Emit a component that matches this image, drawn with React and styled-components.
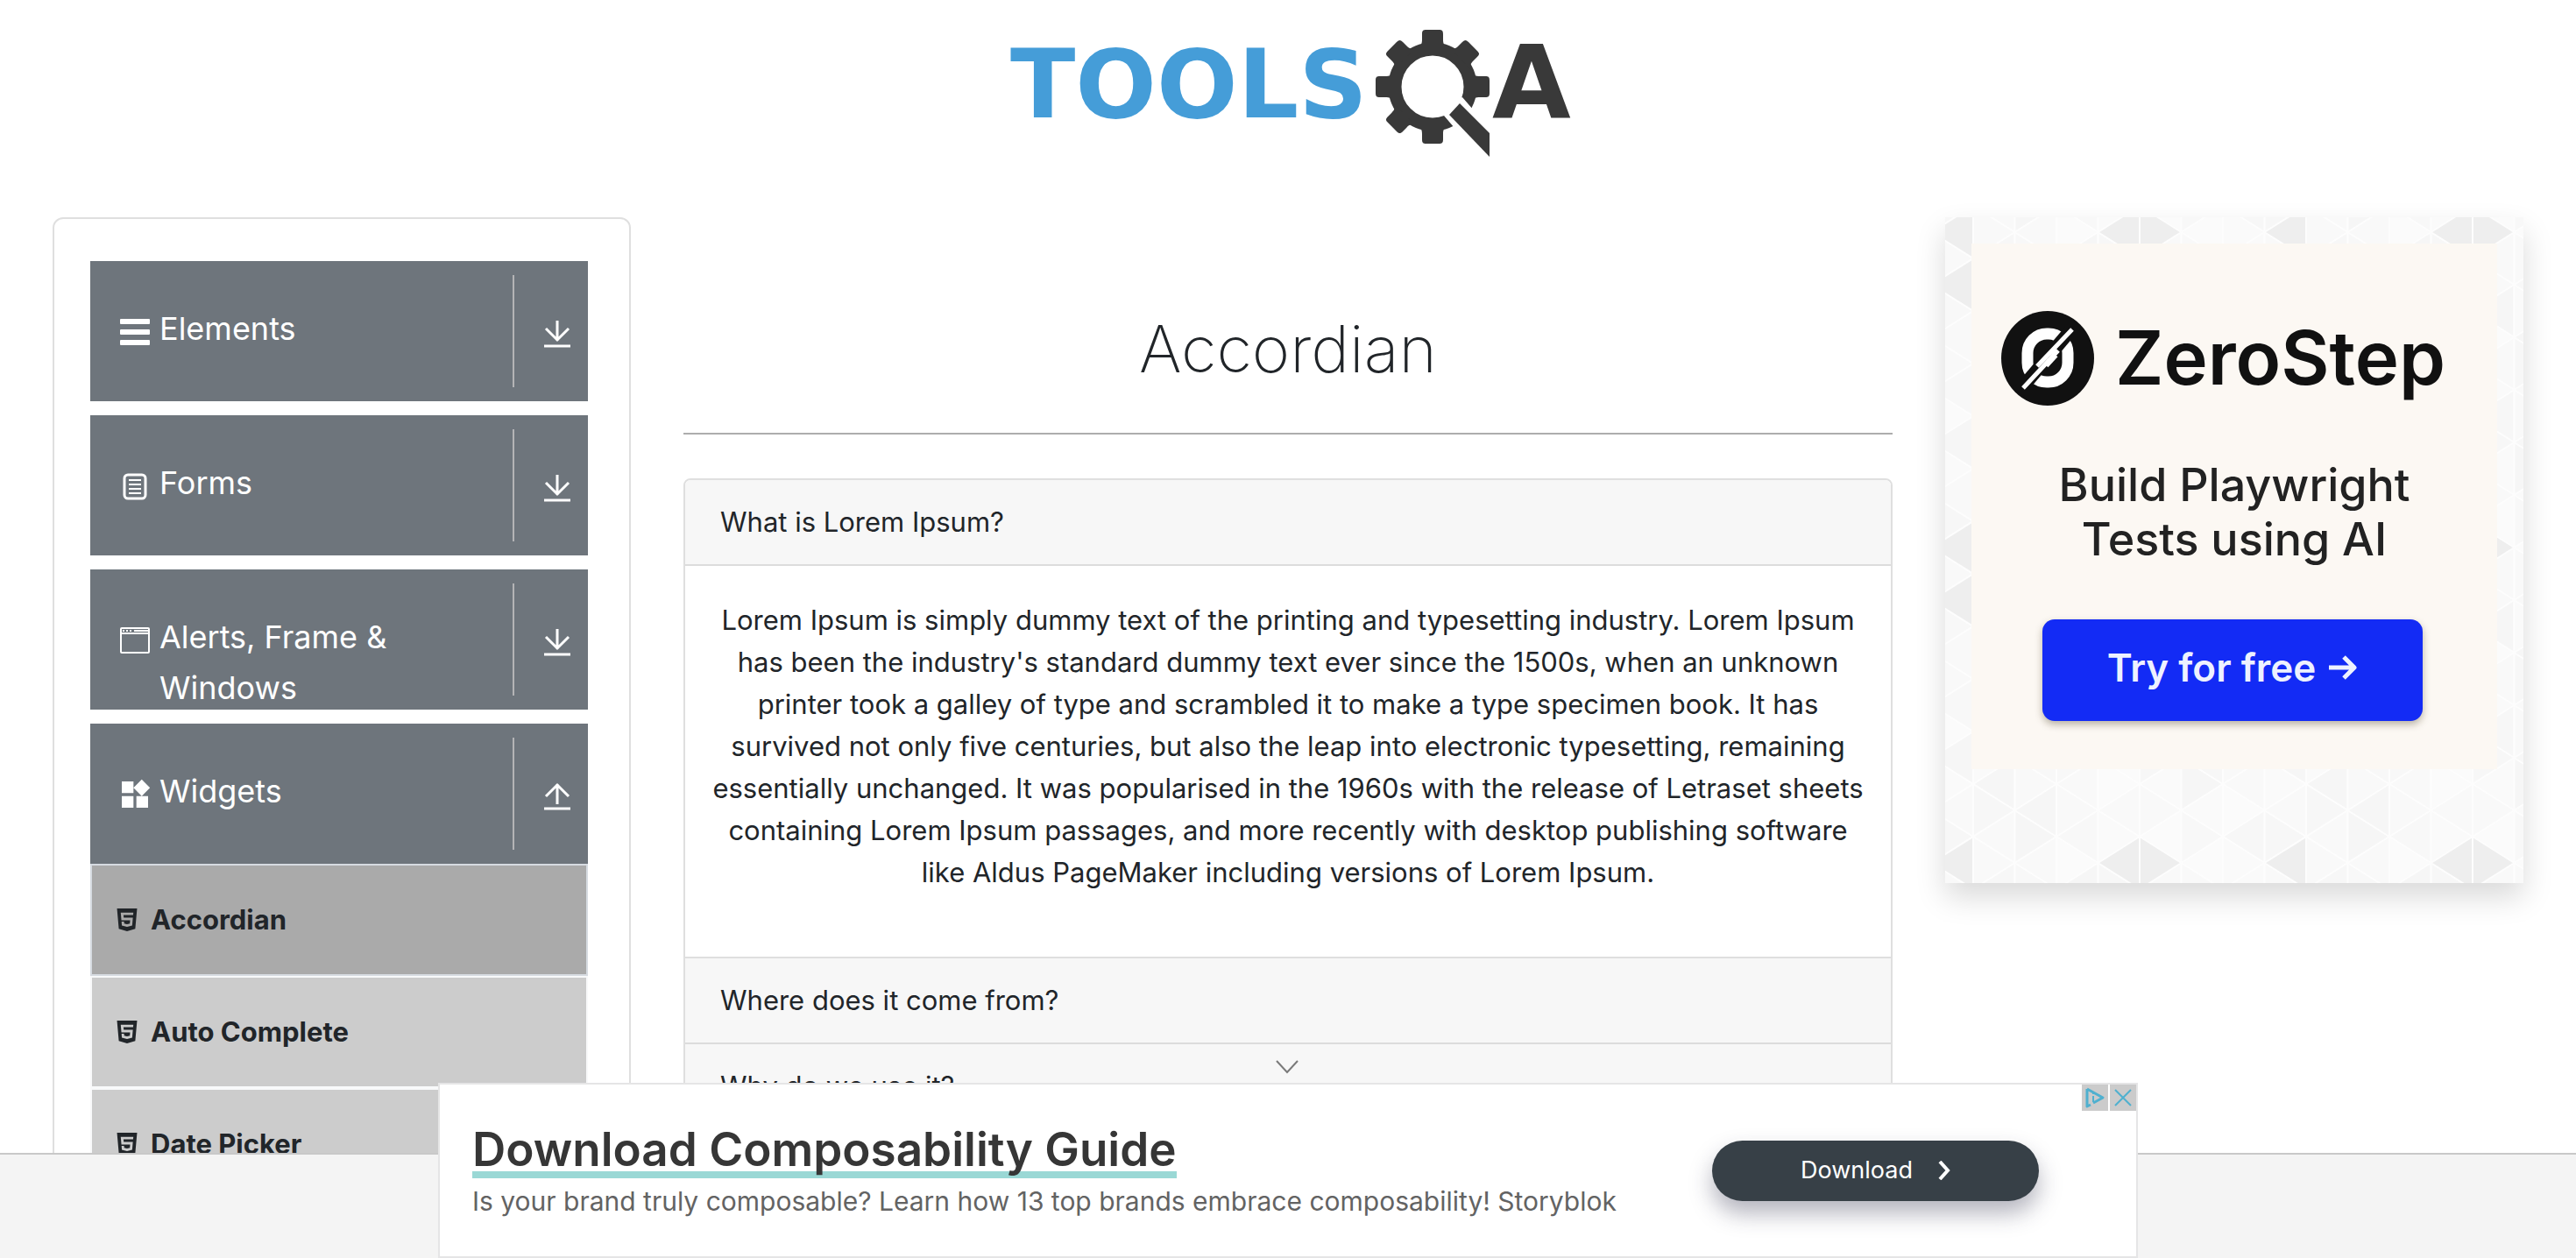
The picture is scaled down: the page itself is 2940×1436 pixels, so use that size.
import React from "react";
import styled, { createGlobalStyle } from "styled-components";
import { AiFillHtml5 } from "react-icons/ai";
import { MdWidgets } from "react-icons/md";

const GlobalStyle = createGlobalStyle`
  *, *::before, *::after { box-sizing: border-box; }
  body {
    margin: 0;
    background: #fff;
    color: #212529;
    font-family: Inter, "Liberation Sans", sans-serif;
    font-size: 31px;
    line-height: 48px;
  }
  button { font: inherit; color: inherit; border: 0; padding: 0; cursor: pointer; }
  a { color: inherit; text-decoration: none; }
`;

const Page = styled.div`
  height: 100vh;
  overflow: hidden;
`;

const Header = styled.header`
  display: flex;
  justify-content: center;
  padding: 34px 0 68px;
`;

const LogoLink = styled.a`
  display: block;
  height: 146px;

  svg { overflow: visible; }
`;

const Columns = styled.div`
  display: grid;
  grid-template-columns: 1fr 2fr 1fr;
  align-items: start;
  padding: 0 30px;
`;

const Column = styled.div`
  min-width: 0;
  padding: 0 30px;
`;

const Sidebar = styled.nav`
  border: 2px solid #dfdfdf;
  border-radius: 12px;
  padding: 48px 47px 48px 41px;
`;

const Group = styled.div`
  & + & { margin-top: 16px; }
`;

const GroupButton = styled.button`
  display: flex;
  width: 100%;
  height: 160px;
  overflow: hidden;
  background: #6e757c;
  color: #fff;
  text-align: left;
`;

const GroupTitle = styled.span`
  display: flex;
  flex: 1;
  gap: 8px;
  padding: 48px 60px 0 31px;
  font-size: 36px;
  line-height: 58px;
`;

const GroupIcon = styled.span`
  display: flex;
  align-items: center;
  flex: none;
  height: 66px;
`;

const GroupToggle = styled.span`
  display: flex;
  align-items: center;
  justify-content: center;
  flex: none;
  width: 86px;
  height: 128px;
  margin: 16px 0;
  padding: 6px 0 0 14px;
  border-left: 2px solid #b4b4b6;
`;

const List = styled.ul`
  list-style: none;
  margin: 0;
  padding: 0;
`;

const ListLink = styled.a`
  display: flex;
  align-items: center;
  gap: 11px;
  height: 128px;
  padding-left: 24px;
  border: 2px solid ${(p) => (p.$active ? "#d6dbe1" : "#f8f9fa")};
  background: ${(p) => (p.$active ? "#aaaaaa" : "#cccccc")};
  font-size: 31px;
  font-weight: 700;
`;

const Title = styled.h1`
  margin: 102px 0 48px;
  font-size: 74px;
  font-weight: 200;
  line-height: 96px;
  text-align: center;
`;

const Rule = styled.hr`
  height: 2px;
  margin: 0 0 50px;
  border: 0;
  background: #adadad;
`;

const Accordion = styled.section`
  border: 2px solid #dfdfdf;
  border-radius: 8px;
  overflow: hidden;
`;

const Question = styled.button`
  display: block;
  width: 100%;
  padding: 24px 40px;
  border-bottom: 2px solid #dcdcdc;
  background: #f7f7f7;
  text-align: left;
`;

const Answer = styled.div`
  padding: 38px 30px 40px;
  border-bottom: 2px solid #dfdfdf;
  text-align: center;

  p { margin: 0 0 32px; }
`;

const Promo = styled.aside`
  position: relative;
  padding: 30px 30px 130px;
  background: #f8f8f8;
  box-shadow: 0 16px 32px rgba(0, 0, 0, 0.15);
`;

const PromoPattern = styled.svg`
  position: absolute;
  inset: 0;
  width: 100%;
  height: 100%;
`;

const PromoBody = styled.div`
  position: relative;
  display: flex;
  flex-direction: column;
  align-items: center;
  aspect-ratio: 1;
  padding-top: 77px;
  background: #fcf8f3;
`;

const Brand = styled.div`
  display: flex;
  align-items: center;
  align-self: stretch;
  gap: 24px;
  height: 108px;
  padding-left: 34px;
  color: #111;
  font-size: 85px;
  font-weight: 600;
`;

const PromoText = styled.p`
  margin: 60px 0 60px;
  color: #222;
  font-size: 52px;
  font-weight: 500;
  line-height: 62px;
  text-align: center;
`;

const PromoButton = styled.a`
  display: flex;
  align-items: center;
  justify-content: center;
  gap: 14px;
  width: 434px;
  height: 116px;
  margin-right: 4px;
  padding-bottom: 6px;
  border-radius: 14px;
  background: #132bf5;
  box-shadow: 0 4px 8px rgba(60, 50, 20, 0.35);
  color: #eef2ff;
  font-size: 44px;
  font-weight: 600;
`;

const Footer = styled.footer`
  position: fixed;
  right: 0;
  bottom: 0;
  left: 0;
  height: 120px;
  border-top: 2px solid #c8c8c8;
  background: #f4f4f4;
`;

const Banner = styled.aside`
  position: fixed;
  bottom: 0;
  left: 50%;
  display: flex;
  align-items: center;
  justify-content: space-between;
  width: 1940px;
  height: 200px;
  padding: 0 111px 0 37px;
  border: 2px solid #e5e5e6;
  background: #fff;
  transform: translateX(-50%);
`;

const BannerText = styled.div`
  padding-top: 6px;
  color: #636363;
  font-size: 30px;
  line-height: 52px;
`;

const BannerTitle = styled.a`
  display: block;
  width: fit-content;
  height: 64px;
  border-bottom: 8px solid #9ad8d5;
  color: #363636;
  font-size: 53px;
  font-weight: 600;
  line-height: 62px;
`;

const BannerButton = styled.a`
  display: flex;
  align-items: center;
  justify-content: center;
  gap: 28px;
  width: 373px;
  height: 69px;
  border-radius: 35px;
  background: #374047;
  box-shadow: 0 14px 26px rgba(40, 40, 70, 0.35);
  color: #fff;
  font-size: 27px;
`;

const Collapse = styled.button`
  position: absolute;
  top: -36px;
  left: 943px;
  display: flex;
  align-items: center;
  justify-content: center;
  width: 48px;
  height: 32px;
  background: none;
`;

const AdControls = styled.div`
  position: absolute;
  top: 0;
  right: 0;
  display: flex;
  gap: 2px;
`;

const AdControl = styled.button`
  display: flex;
  align-items: center;
  justify-content: center;
  width: 30px;
  height: 30px;
  background: #cbcbcb;
`;

const TEETH = [0, 45, 90, 135, 180, 225, 270, 315];

function Logo() {
  return (
    <svg width="648" height="146" viewBox="0 0 648 146" role="img" aria-label="TOOLSQA">
      <text x="7" y="100" fill="#459dd8" fontFamily="DejaVu Sans" fontWeight="700" fontSize="109">
        TOOLS
      </text>
      <g transform="translate(423 0)" fill="#393939">
        <circle cx="66" cy="65" r="43" fill="none" stroke="#393939" strokeWidth="15" />
        {TEETH.map((angle) => (
          <path
            key={angle}
            transform={`rotate(${angle} 66 65)`}
            d="M48 20c5-2 6-4 6-9V5c0-4 1-5 5-5h14c4 0 5 1 5 5v6c0 5 1 7 6 9z"
          />
        ))}
        <path d="M100 77L113 92L124 106L100 124L91 112L79 98L84 84z" fill="#fff" />
        <path d="M97 84L131 118V145L85 97z" />
      </g>
      <text x="557" y="100" fill="#393939" fontFamily="DejaVu Sans" fontWeight="700" fontSize="116">
        A
      </text>
    </svg>
  );
}

const BarsIcon = () => (
  <svg width="40" height="40" viewBox="0 0 40 40" fill="#fff">
    <rect x="3" y="5" width="34" height="6" rx="1" />
    <rect x="3" y="17" width="34" height="6" rx="1" />
    <rect x="3" y="29" width="34" height="6" rx="1" />
  </svg>
);

const FormIcon = () => (
  <svg width="40" height="40" viewBox="0 0 40 40" fill="none" stroke="#fff">
    <rect x="8" y="7" width="24" height="27" rx="4" strokeWidth="3" />
    <path d="M13 13h14M13 18h14M13 23h14M13 28h14" strokeWidth="2" />
  </svg>
);

const WindowIcon = () => (
  <svg width="40" height="40" viewBox="0 0 40 40" fill="none" stroke="#fff" strokeWidth="2">
    <rect x="4" y="6" width="32" height="28" rx="1" />
    <path d="M4 12h32" />
    <path d="M6 9h2M10 9h2M14 9h2M19 9h16" />
  </svg>
);

const WidgetsIcon = () => <MdWidgets size={40} />;

const ArrowIcon = ({ up }) => (
  <svg width="32" height="34" viewBox="0 0 32 34" fill="none" stroke="#fff" strokeWidth="3">
    {up ? <path d="M16 26V3M3 17L16 4l13 13" /> : <path d="M16 2v23M3 11l13 13 13-13" />}
    <path d="M1 31h30" />
  </svg>
);

const GROUPS = [
  { title: "Elements", Icon: BarsIcon },
  { title: "Forms", Icon: FormIcon },
  { title: "Alerts, Frame & Windows", Icon: WindowIcon },
  { title: "Widgets", Icon: WidgetsIcon, items: ["Accordian", "Auto Complete", "Date Picker"] },
];

const COL = 47.5;
const SIDE = 60;
const TINTS = ["#f8f8f8", "#fafafa", "#f6f6f6", "#fbfbfb", "#f9f9f9", "#f9f9f9", "#f7f7f7"];

function buildTriangles() {
  const out = [];
  for (let c = 0; c < 8; c++) {
    const x0 = c * COL;
    const x1 = x0 + COL;
    const a = c % 2 ? 30 : 0;
    const b = c % 2 ? 0 : 30;
    for (let j = -1; j < 6; j++) {
      const ya = a + j * SIDE;
      const yb = b + j * SIDE;
      const row = (j + 6) % 6;
      out.push([`${x0},${ya} ${x0},${ya + 60} ${x1},${ya + 30}`, TINTS[(c * 3 + row * 5) % 7]]);
      out.push([`${x1},${yb} ${x1},${yb + 60} ${x0},${yb + 30}`, TINTS[(c * 5 + row * 2 + 3) % 7]]);
    }
  }
  return out;
}

const TRIANGLES = buildTriangles();

function TrianglePattern() {
  return (
    <PromoPattern aria-hidden="true">
      <defs>
        <pattern id="triangles" x="32" y="47" width="380" height="360" patternUnits="userSpaceOnUse">
          {TRIANGLES.map(([points, fill], i) => (
            <polygon key={i} points={points} fill={fill} stroke="#fdfdfd" strokeWidth="2" />
          ))}
          <g fill="#eeeeee" stroke="#fdfdfd" strokeWidth="2">
            <polygon points="142.5,330 190,300 190,360" />
            <polygon points="237.5,330 190,300 190,360" />
            <polygon points="332.5,330 380,300 380,360" />
            <polygon points="332.5,30 380,0 380,60" />
          </g>
        </pattern>
      </defs>
      <rect width="100%" height="100%" fill="url(#triangles)" />
    </PromoPattern>
  );
}

const ZeroStepMark = () => (
  <svg width="106" height="108" viewBox="0 0 106 108" fill="none">
    <ellipse cx="53" cy="54" rx="53" ry="54" fill="#111" />
    <rect x="30" y="26" width="46" height="55" rx="22" stroke="#fff" strokeWidth="13" />
    <path d="M86 14L20 92" stroke="#111" strokeWidth="15" />
    <path d="M81 21L41 63M65 45L25 88" stroke="#fff" strokeWidth="5" />
    <path d="M52 63L63 51" stroke="#fff" strokeWidth="4" />
  </svg>
);

export default function App() {
  return (
    <>
      <GlobalStyle />
      <Page>
        <Header>
          <LogoLink href="#">
            <Logo />
          </LogoLink>
        </Header>

        <Columns>
          <Column>
            <Sidebar>
              {GROUPS.map(({ title, Icon, items }) => (
                <Group key={title}>
                  <GroupButton type="button" aria-expanded={Boolean(items)}>
                    <GroupTitle>
                      <GroupIcon>
                        <Icon />
                      </GroupIcon>
                      {title}
                    </GroupTitle>
                    <GroupToggle>
                      <ArrowIcon up={Boolean(items)} />
                    </GroupToggle>
                  </GroupButton>
                  {items && (
                    <List>
                      {items.map((item, i) => (
                        <li key={item}>
                          <ListLink href="#" $active={i === 0}>
                            <AiFillHtml5 size={32} />
                            {item}
                          </ListLink>
                        </li>
                      ))}
                    </List>
                  )}
                </Group>
              ))}
            </Sidebar>
          </Column>

          <Column as="main">
            <Title>Accordian</Title>
            <Rule />
            <Accordion>
              <Question type="button" aria-expanded="true">
                What is Lorem Ipsum?
              </Question>
              <Answer>
                <p>
                  Lorem Ipsum is simply dummy text of the printing and typesetting industry. Lorem
                  Ipsum has been the industry's standard dummy text ever since the 1500s, when an
                  unknown printer took a galley of type and scrambled it to make a type specimen
                  book. It has survived not only five centuries, but also the leap into electronic
                  typesetting, remaining essentially unchanged. It was popularised in the 1960s with
                  the release of Letraset sheets containing Lorem Ipsum passages, and more recently
                  with desktop publishing software like Aldus PageMaker including versions of Lorem
                  Ipsum.
                </p>
              </Answer>
              <Question type="button" aria-expanded="false">
                Where does it come from?
              </Question>
              <Question type="button" aria-expanded="false">
                Why do we use it?
              </Question>
            </Accordion>
          </Column>

          <Column>
            <Promo>
              <TrianglePattern />
              <PromoBody>
                <Brand>
                  <ZeroStepMark />
                  ZeroStep
                </Brand>
                <PromoText>
                  Build Playwright
                  <br />
                  Tests using AI
                </PromoText>
                <PromoButton href="#">
                  Try for free
                  <svg width="34" height="32" viewBox="0 0 34 32" fill="none" stroke="#eef2ff" strokeWidth="5">
                    <path d="M1 16h29M18 4l12 12-12 12" strokeLinejoin="round" />
                  </svg>
                </PromoButton>
              </PromoBody>
            </Promo>
          </Column>
        </Columns>

        <Footer />

        <Banner>
          <BannerText>
            <BannerTitle href="#">Download Composability Guide</BannerTitle>
            Is your brand truly composable? Learn how 13 top brands embrace composability! Storyblok
          </BannerText>
          <BannerButton href="#">
            Download
            <svg width="15" height="22" viewBox="0 0 15 22" fill="none" stroke="#fff" strokeWidth="4">
              <path d="M3 1l9 10-9 10" />
            </svg>
          </BannerButton>
          <Collapse type="button" aria-label="Collapse ad">
            <svg width="26" height="16" viewBox="0 0 26 16" fill="none" stroke="#7a7a7a" strokeWidth="2">
              <path d="M1 1l12 13L25 1" />
            </svg>
          </Collapse>
          <AdControls>
            <AdControl type="button" aria-label="About this ad">
              <svg width="24" height="24" viewBox="0 0 24 24" fill="none" stroke="#4fb0cf" strokeWidth="3">
                <path d="M3 2v20l4-2M3 2l18 10-11 6" strokeLinejoin="round" />
                <path d="M10 10v7M10 6v2" strokeWidth="2" />
              </svg>
            </AdControl>
            <AdControl type="button" aria-label="Close ad">
              <svg width="20" height="20" viewBox="0 0 20 20" fill="none" stroke="#4fb0cf" strokeWidth="2">
                <path d="M1 1l18 18M19 1L1 19" />
              </svg>
            </AdControl>
          </AdControls>
        </Banner>
      </Page>
    </>
  );
}
